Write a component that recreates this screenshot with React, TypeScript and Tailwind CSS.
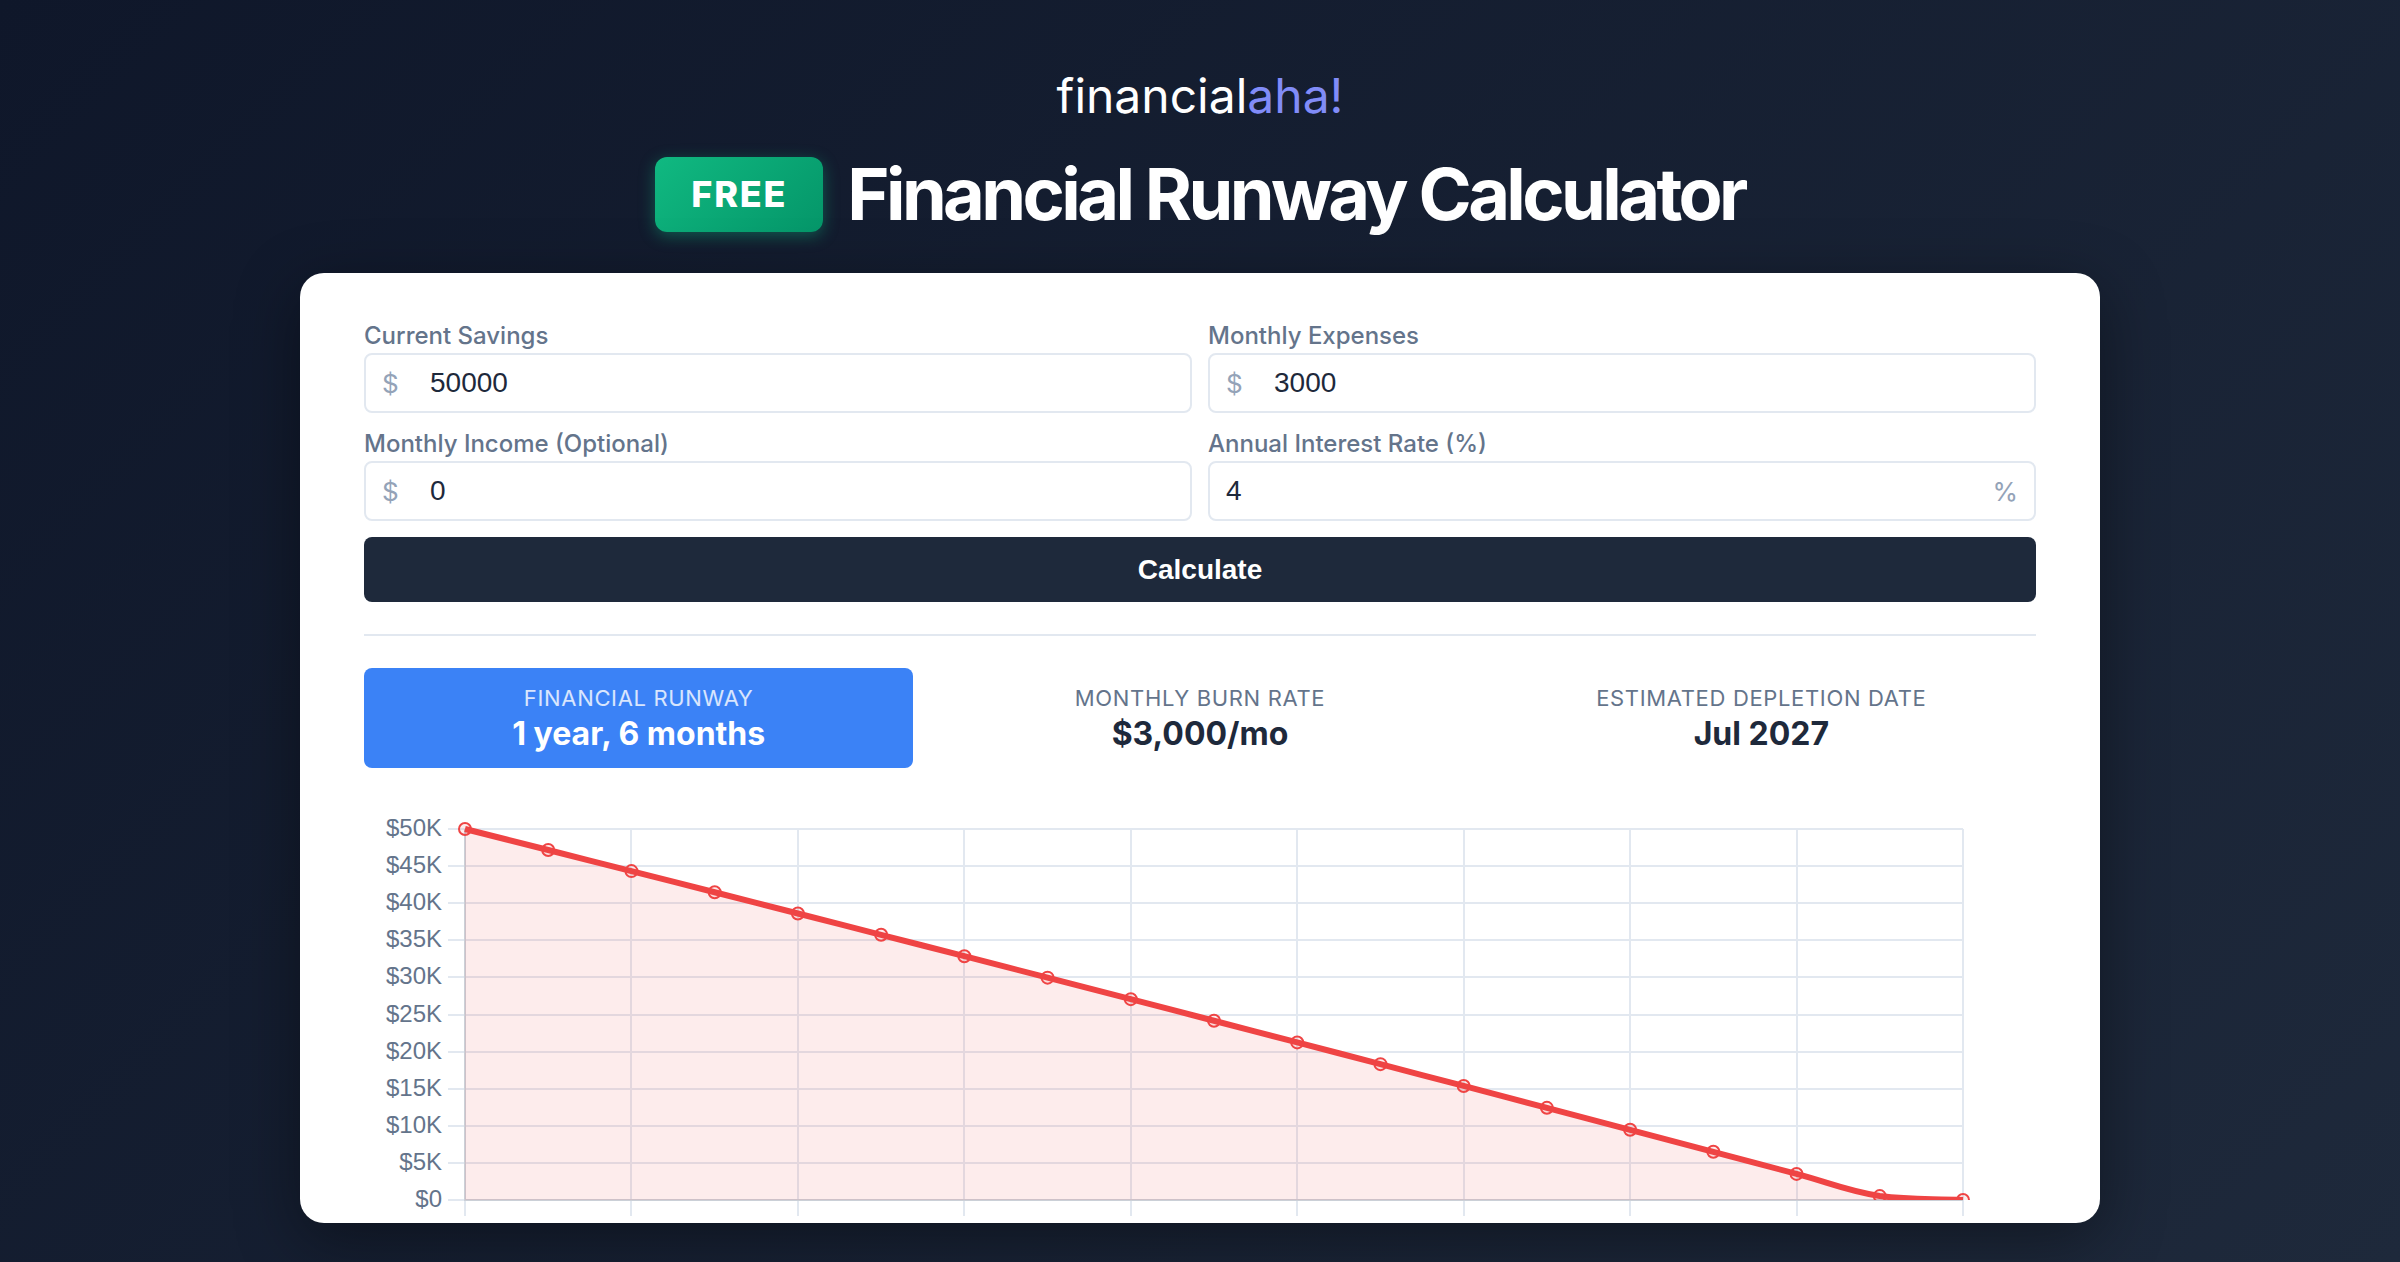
import { useState } from "react";

const PLOT = { left: 101, right: 1599, top: 29, bottom: 400 };
const MAX_BALANCE = 50000;
const TENSION = 0.4;

const yTicks = Array.from({ length: 11 }, (_, i) => MAX_BALANCE - i * 5000);

type Values = { savings: string; expenses: string; income: string; rate: string };

const INITIAL: Values = { savings: "50000", expenses: "3000", income: "0", rate: "4" };

function getBalances({ savings, expenses, income, rate }: Values) {
  const burn = Number(expenses) - Number(income);
  const monthlyRate = Number(rate) / 100 / 12;
  const balances = [Number(savings)];
  while (balances[balances.length - 1] > 0 && balances.length < 19) {
    const last = balances[balances.length - 1];
    balances.push(Math.max(0, last * (1 + monthlyRate) - burn));
  }
  return balances;
}

// cardinal spline, control points kept inside the plot
function getLinePath(points: { x: number; y: number }[]) {
  const clampY = (y: number) => Math.min(PLOT.bottom, Math.max(PLOT.top, y));
  const controls = points.map((p, i) => {
    const prev = points[i - 1] ?? p;
    const next = points[i + 1] ?? p;
    const d01 = Math.hypot(p.x - prev.x, p.y - prev.y);
    const d12 = Math.hypot(next.x - p.x, next.y - p.y);
    const fa = (TENSION * d01) / (d01 + d12 || 1);
    const fb = (TENSION * d12) / (d01 + d12 || 1);
    return {
      inX: p.x - fa * (next.x - prev.x),
      inY: clampY(p.y - fa * (next.y - prev.y)),
      outX: p.x + fb * (next.x - prev.x),
      outY: clampY(p.y + fb * (next.y - prev.y)),
    };
  });
  return points
    .map((p, i) => {
      if (i === 0) return `M${p.x},${p.y}`;
      const a = controls[i - 1];
      const b = controls[i];
      return `C${a.outX},${a.outY} ${b.inX},${b.inY} ${p.x},${p.y}`;
    })
    .join(" ");
}

const Field = ({
  id,
  label,
  prefix,
  suffix,
  value,
  onChange,
}: {
  id: string;
  label: string;
  prefix?: string;
  suffix?: string;
  value: string;
  onChange: (value: string) => void;
}) => (
  <div className="flex flex-col gap-0.5">
    <label htmlFor={id} className="text-[24px] leading-[30px] font-medium text-[#64748b]">
      {label}
    </label>
    <div className="relative">
      {prefix && (
        <span className="pointer-events-none absolute inset-y-0 left-[18px] flex items-center text-[26px] text-[#94a3b8]">
          {prefix}
        </span>
      )}
      <input
        id={id}
        type="text"
        inputMode="decimal"
        value={value}
        onChange={(e) => onChange(e.target.value)}
        className={`h-[60px] w-full rounded-lg border-2 border-[#e2e8f0] bg-white font-['Liberation_Sans',Arial,sans-serif] text-[28px] text-[#1e293b] outline-none focus:border-[#3b82f6] ${
          prefix ? "pr-4 pl-16" : "pr-16 pl-4"
        }`}
      />
      {suffix && (
        <span className="pointer-events-none absolute inset-y-0 right-[18px] flex items-center text-[26px] text-[#94a3b8]">
          {suffix}
        </span>
      )}
    </div>
  </div>
);

const Result = ({ label, value, highlight = false }: { label: string; value: string; highlight?: boolean }) => (
  <div className={`flex flex-col gap-1 rounded-lg p-4 text-center ${highlight ? "bg-[#3b82f6]" : ""}`}>
    <div className={`text-[22px] leading-7 tracking-[0.03em] uppercase ${highlight ? "text-white/80" : "text-[#64748b]"}`}>
      {label}
    </div>
    <div className={`text-[32px] leading-9 font-bold ${highlight ? "text-white" : "text-[#1e293b]"}`}>{value}</div>
  </div>
);

const RunwayChart = ({ balances }: { balances: number[] }) => {
  const width = PLOT.right - PLOT.left;
  const height = PLOT.bottom - PLOT.top;
  const step = width / (balances.length - 1 || 1);
  const points = balances.map((b, i) => ({
    x: PLOT.left + i * step,
    y: PLOT.bottom - (Math.min(b, MAX_BALANCE) / MAX_BALANCE) * height,
  }));
  const line = getLinePath(points);
  const lastX = points[points.length - 1].x;

  return (
    <svg viewBox="0 0 1672 423" className="mt-8 block h-auto w-full" role="img" aria-label="Savings balance by month">
      <defs>
        <clipPath id="plot-area">
          <rect x={PLOT.left - 12} y={PLOT.top - 12} width={width + 24} height={height + 12} />
        </clipPath>
      </defs>

      {/* grid */}
      <g stroke="#e2e8f0" strokeWidth="2">
        {yTicks.map((tick, i) => {
          const y = Math.round(PLOT.top + (i * height) / 10);
          return <line key={tick} x1={PLOT.left - 17} x2={PLOT.right} y1={y} y2={y} />;
        })}
        {points
          .filter((_, i) => i % 2 === 0)
          .map((p) => (
            <line key={p.x} x1={Math.round(p.x)} x2={Math.round(p.x)} y1={PLOT.top} y2={PLOT.bottom + 16} />
          ))}
      </g>
      <path
        d={`M${PLOT.left},${PLOT.top}V${PLOT.bottom}H${PLOT.right}`}
        fill="none"
        stroke="#000000"
        strokeOpacity="0.1"
        strokeWidth="2"
      />

      {/* y axis labels */}
      <g fill="#64748b" fontSize="24" textAnchor="end" className="font-['Liberation_Sans',Arial,sans-serif]">
        {yTicks.map((tick, i) => (
          <text key={tick} x={PLOT.left - 23} y={PLOT.top + (i * height) / 10 + 7}>
            {tick === 0 ? "$0" : `$${tick / 1000}K`}
          </text>
        ))}
      </g>

      {/* balance */}
      <g clipPath="url(#plot-area)">
        <path d={`${line} L${lastX},${PLOT.bottom} L${PLOT.left},${PLOT.bottom} Z`} fill="#ef4444" fillOpacity="0.1" />
        <path d={line} fill="none" stroke="#ef4444" strokeWidth="6" />
        {points.map((p) => (
          <circle
            key={p.x}
            cx={p.x}
            cy={p.y}
            r="6"
            fill="#ef4444"
            fillOpacity="0.1"
            stroke="#ef4444"
            strokeWidth="2"
          />
        ))}
      </g>
    </svg>
  );
};

export default function App() {
  const [values, setValues] = useState<Values>(INITIAL);
  const [submitted, setSubmitted] = useState<Values>(INITIAL);

  const update = (key: keyof Values) => (value: string) => setValues((prev) => ({ ...prev, [key]: value }));

  const balances = getBalances(submitted);
  const months = balances.length - 1;
  const years = Math.floor(months / 12);
  const burn = Number(submitted.expenses) - Number(submitted.income);
  const depletion = new Date(2026, months, 1).toLocaleDateString("en-US", { month: "short", year: "numeric" });

  return (
    <main className="flex min-h-screen flex-col items-center bg-linear-135 from-[#0f172a] to-[#1e293b] px-8 pt-[66px] pb-[39px] font-['Inter',sans-serif]">
      <header className="flex flex-col items-center">
        <a href="#" className="text-[48px] leading-[60px] text-white">
          financial<span className="text-[#818cf8]">aha!</span>
        </a>
        <div className="mt-[25px] flex items-center gap-6">
          <span className="rounded-xl bg-linear-135 from-[#10b981] to-[#059669] px-9 py-4 text-[36px] leading-[43px] font-extrabold tracking-wider text-white shadow-[0_4px_16px_rgba(16,185,129,0.4)]">
            FREE
          </span>
          <h1 className="text-[72px] leading-[86px] font-bold tracking-tighter text-white">Financial Runway Calculator</h1>
        </div>
      </header>

      <section className="mt-9 w-full max-w-[1800px] overflow-hidden rounded-3xl bg-white px-16 pt-12 shadow-[0_16px_64px_rgba(0,0,0,0.4)]">
        <form
          className="grid grid-cols-2 gap-4"
          onSubmit={(e) => {
            e.preventDefault();
            setSubmitted(values);
          }}
        >
          <Field id="savings" label="Current Savings" prefix="$" value={values.savings} onChange={update("savings")} />
          <Field id="expenses" label="Monthly Expenses" prefix="$" value={values.expenses} onChange={update("expenses")} />
          <Field id="income" label="Monthly Income (Optional)" prefix="$" value={values.income} onChange={update("income")} />
          <Field id="rate" label="Annual Interest Rate (%)" suffix="%" value={values.rate} onChange={update("rate")} />
          <button
            type="submit"
            className="col-span-2 h-[65px] cursor-pointer rounded-lg bg-[#1e293b] font-['Liberation_Sans',Arial,sans-serif] text-[28px] font-bold text-white"
          >
            Calculate
          </button>
        </form>

        <div className="mt-8 grid grid-cols-3 gap-3 border-t-2 border-[#e2e8f0] pt-8">
          <Result
            highlight
            label="Financial Runway"
            value={`${years} ${years === 1 ? "year" : "years"}, ${months % 12} months`}
          />
          <Result label="Monthly Burn Rate" value={`$${burn.toLocaleString("en-US")}/mo`} />
          <Result label="Estimated Depletion Date" value={depletion} />
        </div>

        <RunwayChart balances={balances} />
      </section>
    </main>
  );
}
